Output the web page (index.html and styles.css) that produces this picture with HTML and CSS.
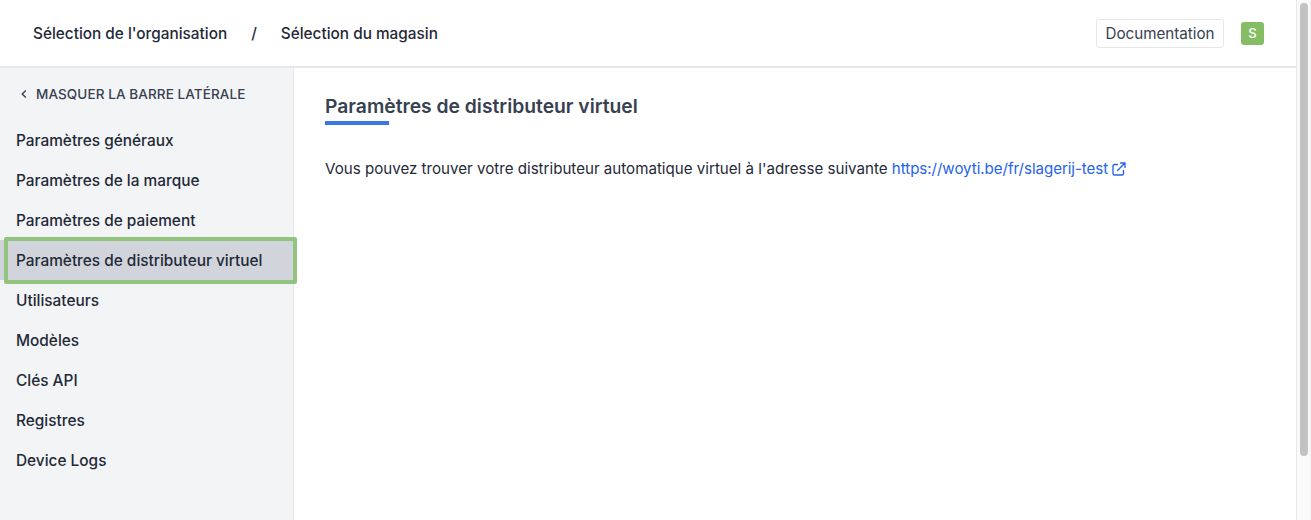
FILE: index.html
```html
<!DOCTYPE html>
<html lang="fr">
<head>
<meta charset="utf-8">
<title>Paramètres de distributeur virtuel</title>
<link rel="stylesheet" href="styles.css">
</head>
<body>
<div class="window">
  <div class="app">
    <header class="topbar">
      <nav class="crumbs">
        <span>Sélection de l'organisation</span>
        <span class="sep">/</span>
        <span>Sélection du magasin</span>
      </nav>
      <div class="actions">
        <a class="doc-btn">Documentation</a>
        <span class="avatar">S</span>
      </div>
    </header>
    <div class="body">
      <aside class="sidebar">
        <div class="collapse">
          <svg class="chev" width="10" height="10" viewBox="0 0 10 10" fill="none" stroke="#374151" stroke-width="1.4"><path d="M6.8 1.6 3.2 5l3.6 3.4"/></svg>
          <span>MASQUER LA BARRE LATÉRALE</span>
        </div>
        <ul class="menu">
          <li class="item">Paramètres généraux</li>
          <li class="item">Paramètres de la marque</li>
          <li class="item">Paramètres de paiement</li>
          <li class="item active">Paramètres de distributeur virtuel</li>
          <li class="item">Utilisateurs</li>
          <li class="item">Modèles</li>
          <li class="item">Clés API</li>
          <li class="item">Registres</li>
          <li class="item">Device Logs</li>
        </ul>
      </aside>
      <main class="content">
        <h1 class="title">Paramètres de distributeur virtuel</h1>
        <div class="underline"></div>
        <p class="text">Vous pouvez trouver votre distributeur automatique virtuel à l'adresse suivante <a class="link">https://woyti.be/fr/slagerij-test<svg class="ext" width="18" height="18" viewBox="0 0 24 24" fill="none" stroke="#2563eb" stroke-width="1.8" stroke-linecap="round" stroke-linejoin="round"><path d="M10 6H6a2 2 0 0 0-2 2v10a2 2 0 0 0 2 2h10a2 2 0 0 0 2-2v-4M14 4h6m0 0v6m0-6L10 14"/></svg></a></p>
      </main>
    </div>
  </div>
  <div class="scrollbar"><div class="thumb"></div></div>
</div>
</body>
</html>
```
FILE: styles.css
```css
* { box-sizing: border-box; }
html, body { margin: 0; height: 100%; overflow: hidden; }
body { font-family: Inter, "Liberation Sans", sans-serif; color: #1f2937; background: #fff; }
.window { display: flex; height: 520px; }
.app { flex: 1; min-width: 0; display: flex; flex-direction: column; }
.topbar {
  height: 68px; flex: none; display: flex; align-items: center; justify-content: space-between;
  padding: 0 32px 0 33px; border-bottom: 2px solid #e5e7eb;
}
.crumbs { display: flex; align-items: center; font-size: 15.35px; font-weight: 500; color: #1f2937; }
.sep { margin: 0 24px; }
.actions { display: flex; align-items: center; gap: 17px; }
.doc-btn {
  height: 29px; width: 128px; display: flex; align-items: center; justify-content: center;
  border: 1px solid #e5e7eb; border-radius: 3px; font-size: 15.2px; color: #374151;
}
.avatar {
  width: 23px; height: 23px; border-radius: 3px; background: #84bd63; color: #fff;
  display: flex; align-items: center; justify-content: center; font-size: 13px; font-weight: 500;
}
.body { flex: 1; display: flex; min-height: 0; }
.sidebar { width: 294px; flex: none; background: #f3f4f6; border-right: 1px solid #e5e7eb; padding-top: 12px; }
.collapse {
  display: flex; align-items: center; gap: 7px; height: 28px; padding-left: 19px;
  font-size: 13.5px; font-weight: 500; color: #374151; letter-spacing: 0.1px;
}
.menu { list-style: none; margin: 12px 0 0; padding: 0; }
.item { height: 40px; display: flex; align-items: center; padding-left: 16px; font-size: 15.4px; font-weight: 500; color: #1f2937; }
.item.active { position: relative; background: #d1d5db; }
.item.active::after { content: ""; position: absolute; top: -3px; right: -4px; bottom: -4px; left: 4px; border: 4px solid #93c47d; border-radius: 2px; }
.content { flex: 1; padding: 26px 31px; }
.title { margin: 0; font-size: 19.3px; line-height: 24px; font-weight: 600; color: #374151; }
.underline { width: 64px; height: 4px; margin-top: 3px; background: #3b76e1; }
.text { margin: 34px 0 0; font-size: 15.13px; line-height: 20px; color: #1f2937; }
.link { color: #2563eb; letter-spacing: -0.06px; }
.ext { margin-left: 2px; vertical-align: -4px; }
.scrollbar { width: 15px; flex: none; background: #fafafa; border-left: 1px solid #e8e8e8; border-right: 1px solid #f0f0f0; padding: 3px 3px 0; }
.thumb { width: 8px; height: 453px; border-radius: 4px; background: #c2c2c2; }
```
